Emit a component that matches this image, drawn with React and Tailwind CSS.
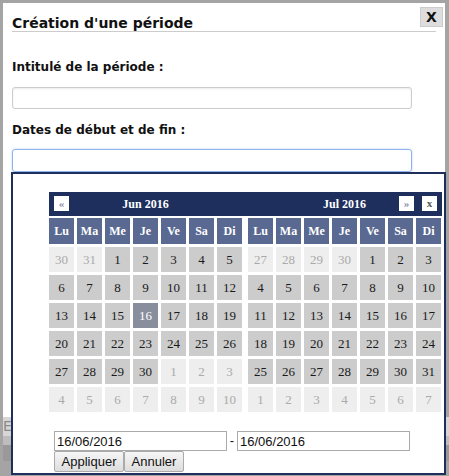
import React from "react";

const june = [
  [[30, 1], [31, 1], [1], [2], [3], [4], [5]],
  [[6], [7], [8], [9], [10], [11], [12]],
  [[13], [14], [15], [16, 0, 1], [17], [18], [19]],
  [[20], [21], [22], [23], [24], [25], [26]],
  [[27], [28], [29], [30], [1, 1], [2, 1], [3, 1]],
  [[4, 1], [5, 1], [6, 1], [7, 1], [8, 1], [9, 1], [10, 1]],
];

const july = [
  [[27, 1], [28, 1], [29, 1], [30, 1], [1], [2], [3]],
  [[4], [5], [6], [7], [8], [9], [10]],
  [[11], [12], [13], [14], [15], [16], [17]],
  [[18], [19], [20], [21], [22], [23], [24]],
  [[25], [26], [27], [28], [29], [30], [31]],
  [[1, 1], [2, 1], [3, 1], [4, 1], [5, 1], [6, 1], [7, 1]],
];

const dayNames = ["Lu", "Ma", "Me", "Je", "Ve", "Sa", "Di"];

const serif = { fontFamily: '"Liberation Serif", "Times New Roman", serif' };

const NavBox = ({ children }) => (
  <span className="flex h-[15px] w-[15px] items-center justify-center bg-white text-[11px] font-bold leading-none text-[#8a8fa8]">
    {children}
  </span>
);

const Month = ({ weeks }) => (
  <div className="grid grid-cols-[repeat(7,25px)] gap-x-[3px] gap-y-[3px]">
    {dayNames.map((d) => (
      <div
        key={d}
        className="flex h-[26px] items-center justify-center bg-[#5a6991] text-[12px] font-bold text-white"
      >
        {d}
      </div>
    ))}
    {weeks.flat().map(([n, other, sel], i) => (
      <div
        key={i}
        className={
          "flex h-[25px] items-center justify-center text-[13px] " +
          (sel
            ? "bg-[#888e9c] text-white"
            : other
            ? "bg-[#eeeeee] text-[#aaaaaa]"
            : "bg-[#cccccc] text-[#1a1a1a]")
        }
      >
        {n}
      </div>
    ))}
  </div>
);

export default function App() {
  return (
    <div
      className="relative h-[476px] w-[449px] overflow-hidden bg-[#a4a4a4] pl-[3px] pt-[3px]"
      style={{ fontFamily: '"DejaVu Sans", Verdana, sans-serif' }}
    >
      {/* Modal */}
      <div className="relative h-[414px] w-[442px] bg-white px-[9px] pt-[12px]">
        <h2 className="border-b border-[#cccccc] text-[14px] font-bold leading-[16px] text-[#111111]">
          Création d'une période
        </h2>
        <button className="absolute right-[2px] top-[4px] flex h-[20px] w-[23px] items-center justify-center border border-[#cccccc] bg-[#dddddd] text-[14px] font-bold text-[#111111]">
          X
        </button>

        <p className="mt-[27px] text-[12px] font-bold leading-[16px] text-[#111111]">
          Intitulé de la période :
        </p>
        <input
          type="text"
          className="mt-[12px] block h-[22px] w-[400px] rounded-[3px] border border-[#cccccc] shadow-[inset_0_1px_2px_rgba(0,0,0,0.08)]"
        />

        <p className="mt-[13px] text-[12px] font-bold leading-[16px] text-[#111111]">
          Dates de début et de fin :
        </p>
        <input
          type="text"
          className="mt-[11px] block h-[23px] w-[400px] rounded-[3px] border border-[#8fb4ee] shadow-[0_0_2px_rgba(80,140,230,0.5)] outline-none"
        />
      </div>

      {/* Page behind, lower left */}
      <div className="flex h-[19px] items-center bg-[#d6d6d6] text-[14px] text-[#8a8a8a]">
        EL
      </div>
      <div className="h-[9px] bg-[#bdbdbd]" />
      <div className="h-[16px] bg-[#999999]" />

      {/* Date range picker */}
      <div
        className="absolute left-[11px] top-[172px] h-[303px] w-[435px] border-2 border-[#1e2f5e] bg-white pl-[36px] pt-[18px]"
        style={serif}
      >
        <div className="flex h-[24px] w-[393px] gap-[6px] bg-[#1e2f5e] text-[12px] font-bold text-white">
          <div className="relative flex w-[193px] items-center justify-center">
            <span className="absolute left-[5px] top-[4px]">
              <NavBox>«</NavBox>
            </span>
            Jun 2016
          </div>
          <div className="relative flex w-[193px] items-center justify-center">
            Jul 2016
            <span className="absolute left-[151px] top-[4px]">
              <NavBox>»</NavBox>
            </span>
            <span className="absolute left-[174px] top-[4px]">
              <NavBox>
                <span className="text-[#555555]">x</span>
              </NavBox>
            </span>
          </div>
        </div>

        <div className="mt-[2px] flex gap-[6px]">
          <Month weeks={june} />
          <Month weeks={july} />
        </div>

        <div
          className="ml-[5px] mt-[19px] text-[13px] text-[#111111]"
          style={{ fontFamily: '"Liberation Sans", Arial, sans-serif' }}
        >
          <div className="flex items-center">
            <input
              type="text"
              defaultValue="16/06/2016"
              className="h-[20px] w-[173px] border border-[#aaaaaa] px-[2px]"
            />
            <span className="w-[10px] text-center">-</span>
            <input
              type="text"
              defaultValue="16/06/2016"
              className="h-[20px] w-[173px] border border-[#aaaaaa] px-[2px]"
            />
          </div>
          <div className="flex">
            <button className="h-[21px] w-[70px] rounded-[2px] border border-[#aaaaaa] bg-gradient-to-b from-[#f6f6f6] to-[#dddddd] text-[13px]">
              Appliquer
            </button>
            <button className="h-[21px] w-[60px] rounded-[2px] border border-[#aaaaaa] bg-gradient-to-b from-[#f6f6f6] to-[#dddddd] text-[13px]">
              Annuler
            </button>
          </div>
        </div>
      </div>
    </div>
  );
}
